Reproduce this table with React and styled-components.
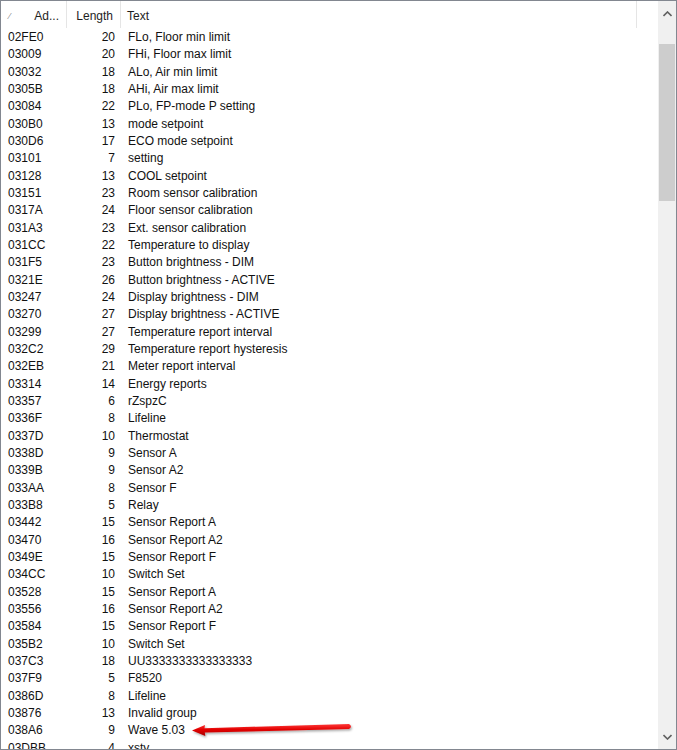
import React from "react";
import styled, { createGlobalStyle } from "styled-components";

const Global = createGlobalStyle`
  html, body { margin: 0; padding: 0; background: #fff; }
  body { font-family: "Liberation Sans", Arial, sans-serif; }
`;

const rows = [
  ["02FE0", 20, "FLo, Floor min limit"],
  ["03009", 20, "FHi, Floor max limit"],
  ["03032", 18, "ALo, Air min limit"],
  ["0305B", 18, "AHi, Air max limit"],
  ["03084", 22, "PLo, FP-mode P setting"],
  ["030B0", 13, "mode setpoint"],
  ["030D6", 17, "ECO mode setpoint"],
  ["03101", 7, "setting"],
  ["03128", 13, "COOL setpoint"],
  ["03151", 23, "Room sensor calibration"],
  ["0317A", 24, "Floor sensor calibration"],
  ["031A3", 23, "Ext. sensor calibration"],
  ["031CC", 22, "Temperature to display"],
  ["031F5", 23, "Button brightness - DIM"],
  ["0321E", 26, "Button brightness - ACTIVE"],
  ["03247", 24, "Display brightness - DIM"],
  ["03270", 27, "Display brightness - ACTIVE"],
  ["03299", 27, "Temperature report interval"],
  ["032C2", 29, "Temperature report hysteresis"],
  ["032EB", 21, "Meter report interval"],
  ["03314", 14, "Energy reports"],
  ["03357", 6, "rZspzC"],
  ["0336F", 8, "Lifeline"],
  ["0337D", 10, "Thermostat"],
  ["0338D", 9, "Sensor A"],
  ["0339B", 9, "Sensor A2"],
  ["033AA", 8, "Sensor F"],
  ["033B8", 5, "Relay"],
  ["03442", 15, "Sensor Report A"],
  ["03470", 16, "Sensor Report A2"],
  ["0349E", 15, "Sensor Report F"],
  ["034CC", 10, "Switch Set"],
  ["03528", 15, "Sensor Report A"],
  ["03556", 16, "Sensor Report A2"],
  ["03584", 15, "Sensor Report F"],
  ["035B2", 10, "Switch Set"],
  ["037C3", 18, "UU3333333333333333"],
  ["037F9", 5, "F8520"],
  ["0386D", 8, "Lifeline"],
  ["03876", 13, "Invalid group"],
  ["038A6", 9, "Wave 5.03"],
  ["03DBB", 4, "xsty"],
];

const Frame = styled.div`
  position: relative;
  box-sizing: border-box;
  width: 677px;
  height: 750px;
  border: 1px solid #828790;
  display: flex;
  overflow: hidden;
  background: #fff;
`;

const ListArea = styled.div`
  flex: 1;
  display: flex;
  flex-direction: column;
  overflow: hidden;
`;

const Header = styled.div`
  display: grid;
  grid-template-columns: 66px 54px 516px;
  height: 27px;
  flex: none;
`;

const HeadCell = styled.div`
  display: flex;
  align-items: center;
  justify-content: ${(p) => (p.$right ? "flex-end" : "flex-start")};
  padding: 2px ${(p) => (p.$right ? "7px" : "0")} 0 ${(p) => (p.$right ? "0" : "6px")};
  border-right: 1px solid #e5e5e5;
  font-size: 12px;
  color: #1e1e1e;
  position: relative;
`;

const SortMark = styled.span`
  position: absolute;
  left: 8px;
  top: 10px;
  font-size: 9px;
  color: #8a8a8a;
`;

const Body = styled.div`
  display: flex;
  flex-direction: column;
  padding-top: 0.5px;
`;

const Row = styled.div`
  display: grid;
  grid-template-columns: 67px 54px 1fr;
  height: 17.33px;
  align-items: center;
  font-size: 12px;
  color: #111;
  flex: none;
`;

const Addr = styled.div`
  padding-left: 7px;
  white-space: nowrap;
`;

const Len = styled.div`
  text-align: right;
  padding-right: 7px;
`;

const Txt = styled.div`
  padding-left: 6px;
  white-space: nowrap;
`;

const ScrollBar = styled.div`
  width: 18px;
  flex: none;
  background: #f0f0f0;
  display: flex;
  flex-direction: column;
  padding-left: 1px;
  box-sizing: border-box;
`;

const ArrowBtn = styled.div`
  height: 25px;
  flex: none;
  display: flex;
  align-items: center;
  justify-content: center;
`;

const Track = styled.div`
  flex: 1;
  display: flex;
  flex-direction: column;
  padding-top: 18px;
`;

const Thumb = styled.div`
  height: 157px;
  background: #cdcdcd;
  margin-right: 1px;
`;

const Annotation = styled.svg`
  position: absolute;
  left: 186px;
  top: 716px;
  overflow: visible;
`;

export default function App() {
  return (
    <>
      <Global />
      <Frame>
        <ListArea>
          <Header>
            <HeadCell $right>
              <SortMark>⁄</SortMark>
              Ad...
            </HeadCell>
            <HeadCell $right>Length</HeadCell>
            <HeadCell>Text</HeadCell>
          </Header>
          <Body>
            {rows.map(([a, l, t], i) => (
              <Row key={i}>
                <Addr>{a}</Addr>
                <Len>{l}</Len>
                <Txt>{t}</Txt>
              </Row>
            ))}
          </Body>
        </ListArea>
        <ScrollBar>
          <ArrowBtn>
            <svg width="9" height="6" viewBox="0 0 9 6">
              <path d="M0.5 5 L4.5 1 L8.5 5" fill="none" stroke="#606060" strokeWidth="1.6" />
            </svg>
          </ArrowBtn>
          <Track>
            <Thumb />
          </Track>
          <ArrowBtn>
            <svg width="9" height="6" viewBox="0 0 9 6">
              <path d="M0.5 1 L4.5 5 L8.5 1" fill="none" stroke="#606060" strokeWidth="1.6" />
            </svg>
          </ArrowBtn>
        </ScrollBar>
        <Annotation width="170" height="24" viewBox="0 0 170 24">
          <defs>
            <linearGradient id="rg" x1="0" y1="0" x2="0" y2="1">
              <stop offset="0" stopColor="#ff3a3a" />
              <stop offset="0.5" stopColor="#e00000" />
              <stop offset="1" stopColor="#a80000" />
            </linearGradient>
            <filter id="sh" x="-10%" y="-50%" width="120%" height="200%">
              <feDropShadow dx="1" dy="1.5" stdDeviation="1.2" floodColor="#000" floodOpacity="0.35" />
            </filter>
          </defs>
          <path
            d="M5 13.5 L18 8 L17.5 11.2 L162 7 Q166 9.5 162 12 L17.8 15.5 L18.3 19 Z"
            fill="url(#rg)"
            filter="url(#sh)"
          />
        </Annotation>
      </Frame>
    </>
  );
}
